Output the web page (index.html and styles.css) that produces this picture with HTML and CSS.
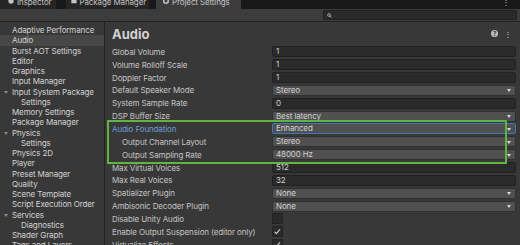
FILE: index.html
```html
<!DOCTYPE html>
<html lang="en">

<head>
    <meta charset="UTF-8" />
    <title>Project Settings - Audio</title>
    <link rel="stylesheet" href="styles.css">
</head>

<body>
    <div class="window">
        <div class="tabs">
            <div class="tab tab-inspector">
                <svg class="tab-icon" viewBox="0 0 8 8"><circle cx="4" cy="4" r="3.5" fill="#c4c4c4"/></svg>
                Inspector
            </div>
            <div class="tab tab-package">
                <svg class="tab-icon" viewBox="0 0 8 8"><rect x="0.5" y="1" width="7" height="6" fill="#c4c4c4"/></svg>
                Package Manager
            </div>
            <div class="tab tab-active">
                <svg class="tab-icon" viewBox="0 0 8 8"><circle cx="4" cy="4" r="3" fill="none" stroke="#c4c4c4" stroke-width="2"/></svg>
                Project Settings
            </div>
            <span class="tabs-menu">&#8942;</span>
        </div>

        <div class="toolbar">
            <div class="search">
                <svg viewBox="0 0 8 8" class="search-icon">
                    <circle cx="3.2" cy="3.2" r="2.2" fill="none" stroke="#bdbdbd" stroke-width="1.2"/>
                    <line x1="4.8" y1="4.8" x2="7.2" y2="7.2" stroke="#bdbdbd" stroke-width="1.4"/>
                </svg>
            </div>
        </div>

        <main>
            <aside class="sidebar">
                <ul>
                    <li>Adaptive Performance</li>
                    <li class="selected">Audio</li>
                    <li>Burst AOT Settings</li>
                    <li>Editor</li>
                    <li>Graphics</li>
                    <li>Input Manager</li>
                    <li class="fold">Input System Package</li>
                    <li class="sub">Settings</li>
                    <li>Memory Settings</li>
                    <li>Package Manager</li>
                    <li class="fold">Physics</li>
                    <li class="sub">Settings</li>
                    <li>Physics 2D</li>
                    <li>Player</li>
                    <li>Preset Manager</li>
                    <li>Quality</li>
                    <li>Scene Template</li>
                    <li>Script Execution Order</li>
                    <li class="fold">Services</li>
                    <li class="sub">Diagnostics</li>
                    <li>Shader Graph</li>
                    <li>Tags and Layers</li>
                </ul>
            </aside>

            <section class="content">
                <div class="content-header">
                    <h1>Audio</h1>
                    <span class="help">?</span>
                    <span class="kebab">&#8942;</span>
                </div>

                <div class="row"><label>Global Volume</label><div class="field">1</div></div>
                <div class="row"><label>Volume Rolloff Scale</label><div class="field">1</div></div>
                <div class="row"><label>Doppler Factor</label><div class="field">1</div></div>
                <div class="row"><label>Default Speaker Mode</label><div class="dropdown">Stereo</div></div>
                <div class="row"><label>System Sample Rate</label><div class="field">0</div></div>
                <div class="row"><label>DSP Buffer Size</label><div class="dropdown">Best latency</div></div>

                <div class="highlight">
                    <div class="row"><label class="label-focus">Audio Foundation</label><div class="dropdown dropdown-focus">Enhanced</div></div>
                    <div class="row"><label class="indent">Output Channel Layout</label><div class="dropdown">Stereo</div></div>
                    <div class="row"><label class="indent">Output Sampling Rate</label><div class="dropdown">48000 Hz</div></div>
                </div>

                <div class="row"><label>Max Virtual Voices</label><div class="field">512</div></div>
                <div class="row"><label>Max Real Voices</label><div class="field">32</div></div>
                <div class="row"><label>Spatializer Plugin</label><div class="dropdown">None</div></div>
                <div class="row"><label>Ambisonic Decoder Plugin</label><div class="dropdown">None</div></div>
                <div class="row"><label>Disable Unity Audio</label><div class="checkbox"></div></div>
                <div class="row"><label>Enable Output Suspension (editor only)</label><div class="checkbox checked"></div></div>
                <div class="row"><label>Virtualize Effects</label><div class="checkbox checked"></div></div>
            </section>
        </main>
    </div>
</body>

</html>
```

FILE: styles.css
```css
:root {
    --bg-tabs: #191919;
    --bg-tab: #252525;
    --bg-panel: #383838;
    --bg-toolbar: #3c3c3c;
    --bg-field: #2a2a2a;
    --bg-dropdown: #505050;
    --border-dark: #212121;
    --text: #c4c4c4;
    --text-light: #d2d2d2;
    --accent-blue: #6e9bd8;
    --green: #62b33f;
}

body {
    margin: 0;
    font-family: Inter, "Noto Sans", sans-serif;
    font-size: 8px;
    letter-spacing: -0.12px;
    color: var(--text);
    background-color: var(--bg-tabs);
}

.window {
    width: 520px;
    height: 245px;
    overflow: hidden;
    display: flex;
    flex-direction: column;
}

.tabs {
    display: flex;
    height: 9px;
    flex-shrink: 0;
    background-color: var(--bg-tabs);
    overflow: hidden;
}

.tab {
    display: flex;
    align-items: flex-start;
    gap: 3px;
    height: 9px;
    line-height: 4px;
    background-color: var(--bg-tab);
    color: var(--text);
}

.tab-inspector {
    padding: 0 4px 0 8px;
    margin-right: 10px;
}

.tab-package {
    padding: 0 3px 0 5px;
    margin-right: 7px;
}

.tab-active {
    background-color: var(--bg-toolbar);
    padding: 0 11px 0 7px;
}

.tab-icon {
    width: 6px;
    height: 6px;
    margin-top: -2px;
}

.tabs-menu {
    margin-left: auto;
    margin-right: 10px;
    line-height: 4px;
    color: var(--text);
}

.toolbar {
    display: flex;
    align-items: center;
    height: 12px;
    flex-shrink: 0;
    background-color: var(--bg-toolbar);
    border-bottom: 1px solid var(--border-dark);
}

.search {
    margin-left: auto;
    margin-right: 3px;
    width: 192px;
    height: 8px;
    background-color: var(--bg-field);
    border: 1px solid var(--border-dark);
    border-radius: 2px;
    display: flex;
    align-items: center;
}

.search-icon {
    width: 5px;
    height: 5px;
    margin-left: 3px;
}

main {
    display: flex;
    flex: 1;
    background-color: var(--bg-panel);
}

.sidebar {
    width: 104px;
    flex-shrink: 0;
    border-right: 1px solid var(--border-dark);

    ul {
        list-style: none;
        margin: 0;
        padding: 3px 0 0;
    }

    li {
        height: 10.25px;
        line-height: 10.25px;
        padding-left: 12px;
        white-space: nowrap;
        color: var(--text-light);
        position: relative;
    }

    .selected {
        background-color: #474747;
    }

    .sub {
        padding-left: 21px;
    }

    .fold::before {
        content: "";
        position: absolute;
        left: 4px;
        top: 4px;
        border-left: 2.5px solid transparent;
        border-right: 2.5px solid transparent;
        border-top: 3.5px solid #8a8a8a;
    }
}

.content {
    flex: 1;
    padding: 0 4px 0 7px;
}

.content-header {
    display: flex;
    align-items: center;
    height: 23.4px;

    h1 {
        flex: 1;
        margin: 0;
        padding-top: 1px;
        font-size: 13px;
        font-weight: 700;
        letter-spacing: 0;
        color: var(--text-light);
    }
}

.help {
    width: 7px;
    height: 7px;
    border-radius: 50%;
    background-color: #bdbdbd;
    color: #383838;
    font-size: 6px;
    font-weight: 700;
    line-height: 7px;
    text-align: center;
    margin-right: 6px;
}

.kebab {
    color: var(--text-light);
    font-size: 8px;
    margin-right: 4px;
}

.row {
    display: grid;
    grid-template-columns: 160px 1fr;
    align-items: center;
    height: 12.87px;

    label {
        white-space: nowrap;
        color: var(--text);
    }

    .indent {
        padding-left: 10px;
    }

    .label-focus {
        color: var(--accent-blue);
    }
}

.field,
.dropdown {
    height: 9px;
    line-height: 9px;
    padding-left: 3px;
    border-radius: 2px;
    color: var(--text-light);
}

.field {
    background-color: var(--bg-field);
    border: 1px solid var(--border-dark);
}

.dropdown {
    background-color: var(--bg-dropdown);
    border: 1px solid #303030;
    position: relative;
}

.dropdown::after {
    content: "";
    position: absolute;
    right: 4px;
    top: 3.5px;
    border-left: 2.5px solid transparent;
    border-right: 2.5px solid transparent;
    border-top: 3px solid #d8d8d8;
}

.dropdown-focus {
    border-color: #3a79bb;
}

.checkbox {
    width: 9px;
    height: 9px;
    background-color: var(--bg-field);
    border: 1px solid var(--border-dark);
    border-radius: 1px;
    position: relative;
}

.checked::after {
    content: "";
    position: absolute;
    left: 3px;
    top: 1px;
    width: 2px;
    height: 4.5px;
    border-right: 1.3px solid #e0e0e0;
    border-bottom: 1.3px solid #e0e0e0;
    transform: rotate(40deg);
}

/* annotation box round the foundation settings */
.highlight {
    position: relative;
}

.highlight::after {
    content: "";
    position: absolute;
    top: -3px;
    bottom: -3px;
    left: -5px;
    right: 9px;
    border: 2px solid var(--green);
    pointer-events: none;
}
```
